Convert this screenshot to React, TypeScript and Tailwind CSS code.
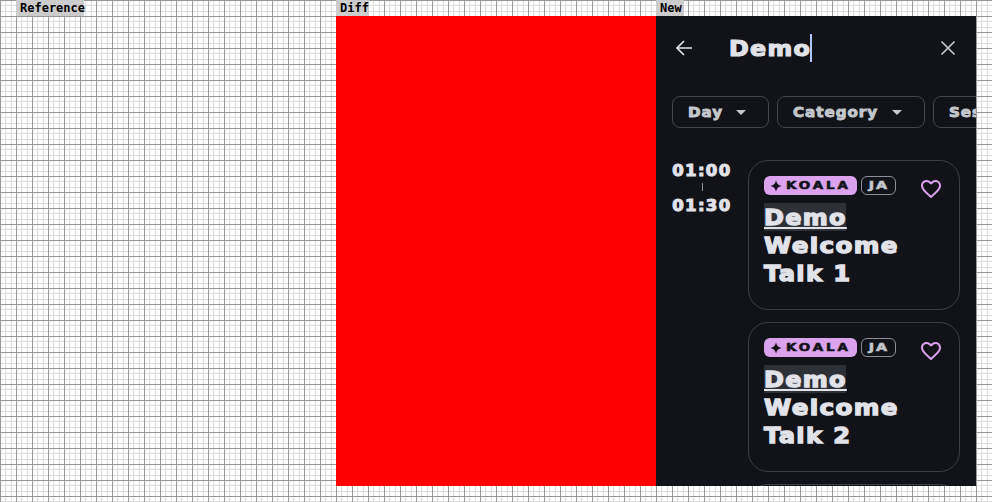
const HEAVY = "font-['DejaVu_Sans',sans-serif] font-bold";

function Caret() {
  return (
    <svg viewBox="0 0 24 24" className="w-6 h-6 fill-current shrink-0">
      <path d="M7 10l5 5 5-5z" />
    </svg>
  );
}

function FilterChip({ label, width }: { label: string; width: string }) {
  return (
    <div
      className={`${width} shrink-0 h-8 rounded-lg border border-[#44474e] flex items-center justify-between pl-[15px] pr-[15px] text-[#c4c7cc] text-sm tracking-[0.9px] [-webkit-text-stroke:0.9px_currentColor] ${HEAVY}`}
    >
      <span className="inline-block origin-left scale-x-[1.08]">{label}</span>
      <Caret />
    </div>
  );
}

function TalkCard({ index }: { index: number }) {
  return (
    <div className="w-[212px] h-[150px] shrink-0 rounded-[20px] border border-[#3c4046] px-[15px] pt-[15px] relative">
      <div className="flex items-center gap-1">
        <span className={`h-[19px] w-[93px] rounded-md bg-[#dba2ee] text-[#111318] flex items-center pl-[6px] text-[11px] tracking-[2.4px] [-webkit-text-stroke:0.6px_currentColor] ${HEAVY}`}>
          <svg viewBox="0 0 12 12" className="w-3 h-3 mr-1 fill-current shrink-0">
            <path d="M6 0.5C6.6 3.6 8.4 5.4 11.5 6 8.4 6.6 6.6 8.4 6 11.5 5.4 8.4 3.6 6.6 0.5 6 3.6 5.4 5.4 3.6 6 0.5z" />
          </svg>
          <span className="inline-block origin-left scale-x-[1.22] pt-px">KOALA</span>
        </span>
        <span className={`h-[19px] w-[35px] rounded-md border border-[#8e9099] text-[#c4c7cc] flex items-center justify-center text-[11px] tracking-[1.5px] [-webkit-text-stroke:0.6px_currentColor] ${HEAVY}`}>
          <span className="inline-block scale-x-[1.3] pt-px">JA</span>
        </span>
      </div>
      <svg viewBox="0 0 24 24" className="absolute right-4 top-4 w-6 h-6 fill-[#dba2ee]">
        <path d="M16.5 3c-1.74 0-3.41.81-4.5 2.09C10.91 3.81 9.24 3 7.5 3 4.42 3 2 5.42 2 8.5c0 3.78 3.4 6.86 8.55 11.54L12 21.35l1.45-1.32C18.6 15.36 22 12.28 22 8.5 22 5.42 19.58 3 16.5 3zm-4.4 15.55l-.1.1-.1-.1C7.14 14.24 4 11.39 4 8.5 4 6.5 5.5 5 7.5 5c1.54 0 3.04.99 3.57 2.36h1.87C13.46 5.99 14.96 5 16.5 5c2 0 3.5 1.5 3.5 3.5 0 2.89-3.14 5.74-7.9 10.05z" />
      </svg>
      <div className={`mt-2 text-[22px] leading-7 tracking-[1.2px] text-[#e2e2e9] [-webkit-text-stroke:1.3px_currentColor] ${HEAVY}`}>
        <div className="h-[29px]">
          <mark className="block w-[82px] h-7 bg-[#2e3038] text-[#e2e2e9]">
            <span className="block w-fit origin-left scale-x-[1.09] pt-px underline decoration-2 underline-offset-[2px]">Demo</span>
          </mark>
        </div>
        <div className="origin-left scale-x-[1.12]">Welcome</div>
        <div className="origin-left scale-x-[1.1]">Talk {index}</div>
      </div>
    </div>
  );
}

export default function App() {
  return (
    <div className="w-[992px] h-[502px] overflow-hidden bg-white bg-[linear-gradient(#999999_1px,transparent_1px),linear-gradient(90deg,#999999_1px,transparent_1px),linear-gradient(transparent_5px,#dcdcdc_5px,#dcdcdc_6px,transparent_6px,transparent_11px,#dcdcdc_11px,#dcdcdc_12px,transparent_12px),linear-gradient(90deg,transparent_5px,#dcdcdc_5px,#dcdcdc_6px,transparent_6px,transparent_11px,#dcdcdc_11px,#dcdcdc_12px,transparent_12px)] bg-[size:16px_16px]">
      {/* Labels */}
      <div className="flex pl-4 h-4 font-['DejaVu_Sans_Mono',monospace] text-xs font-bold leading-4 text-black">
        <div className="w-[320px]"><span className="inline-block bg-[#cccccc] pl-1 w-[68px]">Reference</span></div>
        <div className="w-[320px]"><span className="inline-block bg-[#cccccc] pl-1 w-[33px]">Diff</span></div>
        <div className="w-[320px]"><span className="inline-block bg-[#cccccc] pl-1 w-[28px]">New</span></div>
      </div>

      <div className="flex pl-4 h-[470px]">
        <div className="w-[320px]" />
        <div className="w-[320px] bg-[#ff0000]" />

        {/* New panel */}
        <div className="w-[320px] bg-[#111318] overflow-hidden">
          {/* Search bar */}
          <div className="h-16 flex items-center px-4">
            <svg viewBox="0 0 24 24" className="w-6 h-6 stroke-[#e2e2e9] fill-none stroke-[1.7] shrink-0">
              <path d="M20 12H5M12 5l-7 7 7 7" />
            </svg>
            <div className={`ml-[33px] flex items-center text-[22px] tracking-[1.2px] text-[#e2e2e9] [-webkit-text-stroke:1.2px_currentColor] ${HEAVY}`}>
              <span className="inline-block w-[81px] origin-left scale-x-[1.08]">Demo</span>
              <span className="w-[2px] h-7 bg-[#adc6ff]" />
            </div>
            <svg viewBox="0 0 24 24" className="ml-auto w-6 h-6 stroke-[#c4c7cc] fill-none stroke-[1.7] shrink-0">
              <path d="M5.5 5.5l13 13M18.5 5.5l-13 13" />
            </svg>
          </div>

          {/* Filters */}
          <div className="flex gap-2 px-4 mt-4">
            <FilterChip label="Day" width="w-[97px]" />
            <FilterChip label="Category" width="w-[148px]" />
            <FilterChip label="Session" width="w-[130px]" />
          </div>

          {/* Schedule */}
          <div className="flex mt-8 pl-4">
            <div className={`w-[60px] shrink-0 mr-4 flex flex-col items-center pt-[1px] text-[#e2e2e9] text-[15px] leading-[20px] tracking-[1.2px] [-webkit-text-stroke:1px_currentColor] ${HEAVY}`}>
              <span className="inline-block scale-x-[1.1]">01:00</span>
              <span className="w-px h-2 bg-[#8e9099] mt-[2px] mb-[5px]" />
              <span className="inline-block scale-x-[1.1]">01:30</span>
            </div>
            <div className="flex flex-col gap-3">
              <TalkCard index={1} />
              <TalkCard index={2} />
              <TalkCard index={3} />
            </div>
          </div>
        </div>
      </div>
    </div>
  );
}
